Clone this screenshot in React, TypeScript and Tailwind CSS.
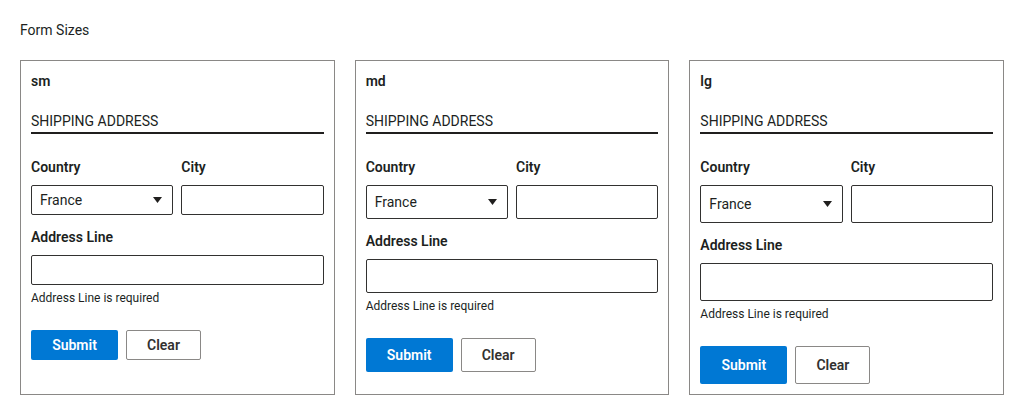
import React from 'react';

type Size = 'sm' | 'md' | 'lg';

const heights: Record<Size, string> = {
  sm: 'h-[30px]',
  md: 'h-[34px]',
  lg: 'h-[38px]',
};

function FormCard({ size }: { size: Size }) {
  const h = heights[size];
  return (
    <div className="flex-1 border border-[#8a8886] p-[10px]">
      <div className="text-[14px] leading-[20px] font-semibold text-[#201f1e]">{size}</div>
      <div className="mt-[20px] text-[14px] leading-[20px] text-[#201f1e] border-b-2 border-[#201f1e] pb-px">
        SHIPPING ADDRESS
      </div>
      <div className="mt-[23px] flex gap-[8px]">
        <div className="flex-1">
          <div className="text-[14px] leading-[20px] font-semibold text-[#201f1e]">Country</div>
          <div
            className={`mt-[8px] ${h} flex items-center justify-between border border-[#323130] rounded-[2px] pl-[8px] pr-[10px] text-[14px] text-[#201f1e]`}
          >
            <span>France</span>
            <svg width="9" height="6" viewBox="0 0 9 6">
              <path d="M0 0 L9 0 L4.5 6 Z" fill="#201f1e" />
            </svg>
          </div>
        </div>
        <div className="flex-1">
          <div className="text-[14px] leading-[20px] font-semibold text-[#201f1e]">City</div>
          <div className={`mt-[8px] ${h} border border-[#323130] rounded-[2px]`} />
        </div>
      </div>
      <div className="mt-[12px] text-[14px] leading-[20px] font-semibold text-[#201f1e]">Address Line</div>
      <div className={`mt-[8px] ${h} border border-[#323130] rounded-[2px]`} />
      <div className="mt-[5px] text-[12px] leading-[16px] text-[#201f1e]">Address Line is required</div>
      <div className="mt-[24px] flex gap-[8px]">
        <button
          className={`${h} w-[87px] rounded-[2px] bg-[#0078d4] text-white text-[14px] font-semibold`}
        >
          Submit
        </button>
        <button
          className={`${h} w-[75px] rounded-[2px] border border-[#8a8886] bg-white text-[#323130] text-[14px] font-semibold`}
        >
          Clear
        </button>
      </div>
    </div>
  );
}

export default function App() {
  return (
    <div className="w-[1024px] h-[415px] bg-white p-[20px] font-['Roboto',sans-serif]">
      <div className="text-[14px] leading-[20px] text-[#201f1e]">Form Sizes</div>
      <div className="mt-[20px] flex items-stretch gap-[20px] h-[335px]">
        <FormCard size="sm" />
        <FormCard size="md" />
        <FormCard size="lg" />
      </div>
    </div>
  );
}
